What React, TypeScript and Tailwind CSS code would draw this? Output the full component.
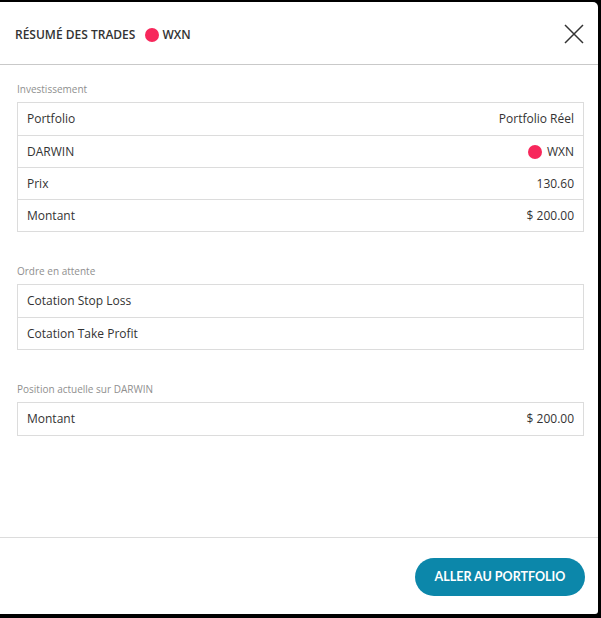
import React from "react";

const Dot = () => <span className="inline-block w-[14px] h-[14px] rounded-full bg-[#f7275b]" />;

type Row = { label: string; value?: React.ReactNode };

function Section({ title, rows }: { title: string; rows: Row[] }) {
  return (
    <div>
      <p className="text-[10px] leading-[14px] text-[#8f8f8f] mb-[6px]">{title}</p>
      <div className="border border-[#dcdcdc]">
        {rows.map((r, i) => (
          <div
            key={r.label}
            className={`flex items-center justify-between h-[32px] px-[9px] text-[12px] text-[#333] ${i > 0 ? "border-t border-[#dcdcdc]" : ""}`}
          >
            <span>{r.label}</span>
            {r.value && <span className="flex items-center">{r.value}</span>}
          </div>
        ))}
      </div>
    </div>
  );
}

export default function App() {
  return (
    <div className="w-[601px] h-[618px] bg-black pt-[2px] pr-[3px] pb-[4px]" style={{ fontFamily: '"Open Sans", sans-serif' }}>
      <div className="h-[612px] bg-white rounded-tr-[5px] rounded-br-[3px] flex flex-col">
        <div className="h-[63px] flex items-center justify-between pl-[14px] pr-[14px] border-b border-[#c9c9c9]">
          <div className="flex items-center gap-[3px] text-[12px] font-semibold text-[#333] pt-[3px]">
            <span className="mr-[7px] ml-[1px]">RÉSUMÉ DES TRADES</span>
            <Dot />
            <span>WXN</span>
          </div>
          <svg width="20" height="20" viewBox="0 0 20 20" className="mt-[2px]">
            <path d="M1 1L19 19M19 1L1 19" stroke="#333" strokeWidth="1.5" fill="none" />
          </svg>
        </div>
        <div className="flex-1 pt-[17px] px-[17px] pr-[14px] flex flex-col gap-[32px]">
          <Section
            title="Investissement"
            rows={[
              { label: "Portfolio", value: "Portfolio Réel" },
              {
                label: "DARWIN",
                value: (
                  <>
                    <Dot />
                    <span className="ml-[5px]">WXN</span>
                  </>
                ),
              },
              { label: "Prix", value: "130.60" },
              { label: "Montant", value: "$ 200.00" },
            ]}
          />
          <Section title="Ordre en attente" rows={[{ label: "Cotation Stop Loss" }, { label: "Cotation Take Profit" }]} />
          <Section title="Position actuelle sur DARWIN" rows={[{ label: "Montant", value: "$ 200.00" }]} />
        </div>
        <div className="border-t border-[#dcdcdc] flex justify-end pt-[20px] pb-[18px] pr-[13px]">
          <button
            className="h-[38px] w-[170px] rounded-full bg-[#0c87aa] text-white text-[12.5px] font-bold"
            style={{ fontFamily: "Lato, sans-serif" }}
          >
            ALLER AU PORTFOLIO
          </button>
        </div>
      </div>
    </div>
  );
}
